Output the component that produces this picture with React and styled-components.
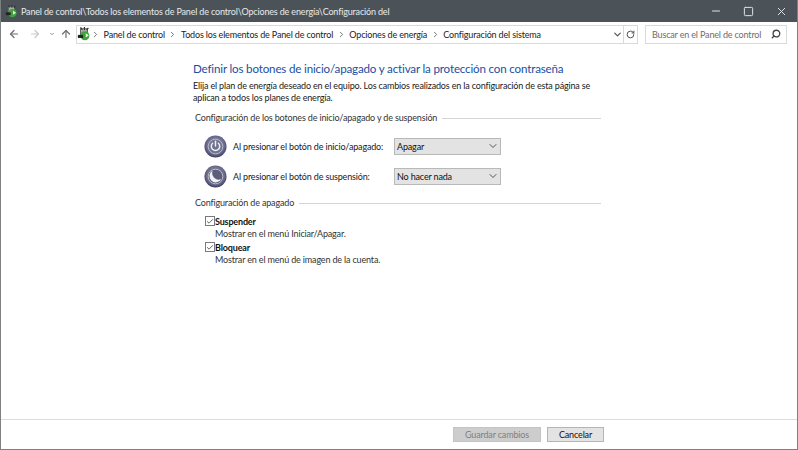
import React from 'react'
import styled, { createGlobalStyle } from 'styled-components'
import { ArrowLeft, ArrowRight, ArrowUp, ChevronDown, ChevronRight, RotateCw, Search, Minus, Square, X, Check } from 'lucide-react'

const Global = createGlobalStyle`
  html, body { margin: 0; padding: 0; height: 100%; background: #fff; }
  body { font-family: "Lato", "Open Sans", sans-serif; font-size: 9px; letter-spacing: -0.16px; color: #1a1a1a; }
  #root { height: 100%; }
`

const Win = styled.div`
  width: 798px;
  height: 450px;
  box-sizing: border-box;
  border: 1px solid #7d8184;
  border-top: none;
  display: flex;
  flex-direction: column;
  overflow: hidden;
`
const TitleBar = styled.div`
  height: 22px;
  margin: 0 -1px;
  flex: none;
  background: #4b5359;
  color: #e8eaeb;
  display: flex;
  align-items: center;
  padding-left: 5px;
`
const TitleText = styled.span`
  margin-left: 3px;
  flex: 1;
  white-space: nowrap;
`
const WinBtn = styled.div`
  width: 33px;
  display: flex;
  justify-content: center;
  color: #dfe2e4;
`
const NavBar = styled.div`
  height: 24px;
  flex: none;
  display: flex;
  align-items: center;
  padding: 0 10px 0 6px;
`
const NavBtn = styled.div`
  width: ${p => p.$w}px;
  flex: none;
  display: flex;
  justify-content: center;
  color: ${p => p.$color || '#6d6d6d'};
`
const Address = styled.div`
  width: 562px;
  height: 19px;
  flex: none;
  box-sizing: border-box;
  border: 1px solid #d9d9d9;
  display: flex;
  align-items: center;
  color: #222;
`
const Crumb = styled.span`
  margin: 0 3.6px;
  white-space: nowrap;
`
const Sep = styled.span`
  display: flex;
  color: #777;
  flex: none;
`
const AddressEnd = styled.div`
  margin-left: auto;
  display: flex;
  align-items: center;
  height: 100%;
  color: #555;
`
const RefreshBox = styled.div`
  width: 14px;
  height: 100%;
  border-left: 1px solid #d9d9d9;
  box-sizing: border-box;
  display: flex;
  align-items: center;
  justify-content: center;
`
const SearchBox = styled.div`
  width: 142px;
  height: 19px;
  margin-left: auto;
  box-sizing: border-box;
  border: 1px solid #d9d9d9;
  display: flex;
  align-items: center;
  justify-content: space-between;
  padding: 0 5px 0 6px;
  color: #6d6d6d;
  white-space: nowrap;
`
const Body = styled.main`
  flex: 1;
  padding: 15px 0 0 192px;
  width: 408px;
`
const Heading = styled.h1`
  margin: 0;
  font-size: 11.6px;
  line-height: 15px;
  font-weight: 400;
  letter-spacing: -0.17px;
  color: #1b4fa0;
  white-space: nowrap;
`
const Intro = styled.p`
  margin: 4px 0 0;
  line-height: 12px;
  white-space: nowrap;
`
const Group = styled.div`
  display: flex;
  align-items: center;
  margin: ${p => p.$mt}px 0 0 2px;
  color: #333;
  line-height: 12px;
  white-space: nowrap;
  &::after {
    content: '';
    flex: 1;
    height: 1px;
    margin-left: 5px;
    background: #d4d4d4;
  }
`
const ActionRow = styled.div`
  display: flex;
  align-items: center;
  height: 30px;
  padding-left: 11px;
  margin-top: ${p => p.$mt}px;
`
const ActionLabel = styled.span`
  width: 161px;
  margin-left: 6px;
  white-space: nowrap;
`
const Select = styled.div`
  width: 107px;
  height: 17px;
  box-sizing: border-box;
  border: 1px solid #b9b9b9;
  background: #e3e3e3;
  color: #111;
  display: flex;
  align-items: center;
  justify-content: space-between;
  padding: 0 1px 0 2px;
`
const CheckRow = styled.div`
  display: flex;
  margin: ${p => p.$mt}px 0 0 12px;
`
const Box = styled.div`
  width: 10px;
  height: 10px;
  flex: none;
  margin-top: 2px;
  box-sizing: border-box;
  border: 1px solid #7a7a7a;
  display: flex;
  align-items: center;
  justify-content: center;
  color: #555;
`
const CheckText = styled.div`
  line-height: 12px;
  white-space: nowrap;
  padding-top: 2px;
`
const CheckTitle = styled.div`
  font-weight: 700;
  color: #111;
`
const CheckHint = styled.div`
  color: #333;
`
const Footer = styled.footer`
  height: 30px;
  flex: none;
  border-top: 1px solid #dcdcdc;
  display: flex;
  justify-content: flex-end;
  align-items: center;
  gap: 6px;
  padding-right: 193px;
  box-sizing: border-box;
`
const Btn = styled.div`
  width: ${p => p.$w}px;
  height: 15px;
  box-sizing: border-box;
  border: 1px solid ${p => p.$off ? '#c4c4c4' : '#b5b5b5'};
  background: ${p => p.$off ? '#cdcdcd' : '#e3e3e3'};
  color: ${p => p.$off ? '#7f7f7f' : '#111'};
  display: flex;
  align-items: center;
  justify-content: center;
`

const CpIcon = ({ size }) => (
  <svg width={size} height={size} viewBox="0 0 16 16" style={{ flex: 'none' }}>
    <rect x="4" y="2" width="8" height="9" fill="#9fb0a0" stroke="#555" />
    <circle cx="9" cy="10" r="5.2" fill="#3fa53a" />
    <path d="M1 9h6v3.5H1z" fill="#222" />
    <path d="M4 0.5l2 2.5 M8.5 0v3.5 M13 1l-2 2.5" stroke="#333" strokeWidth="1.3" />
    <path d="M10 7l3.5 2.5-3.5 2.5z" fill="#e9f5e5" />
  </svg>
)

const OrbIcon = ({ moon }) => (
  <svg width="23" height="23" viewBox="0 0 24 24" style={{ flex: 'none' }}>
    <defs>
      <radialGradient id={moon ? 'orbM' : 'orbP'} cx="50%" cy="45%" r="55%">
        <stop offset="0%" stopColor="#a5a5c0" />
        <stop offset="75%" stopColor="#6a6a8c" />
        <stop offset="100%" stopColor="#3c3c58" />
      </radialGradient>
    </defs>
    <circle cx="12" cy="12" r="11.5" fill={`url(#${moon ? 'orbM' : 'orbP'})`} />
    <circle cx="12" cy="12" r="7.6" fill={moon ? '#5d5f78' : '#70738e'} stroke="#c2c2d4" strokeWidth=".9" />
    {moon ? (
      <path d="M9 5.8a6.6 6.6 0 1 0 9 9 7 7 0 0 1-9-9z" fill="#f1f1f6" />
    ) : (
      <g fill="none" stroke="#f0f0f6" strokeWidth="1.5" strokeLinecap="round">
        <path d="M9 8.6a4.4 4.4 0 1 0 6 0" />
        <path d="M12 6.5v5" />
      </g>
    )}
  </svg>
)

const Arrow = () => <ChevronDown size={12} strokeWidth={1} absoluteStrokeWidth color="#555" />
const Bread = () => <Sep><ChevronRight size={9} strokeWidth={1} absoluteStrokeWidth /></Sep>

export default function App() {
  return (
    <>
      <Global />
      <Win>
        <TitleBar>
          <CpIcon size={13} />
          <TitleText>Panel de control\Todos los elementos de Panel de control\Opciones de energía\Configuración del</TitleText>
          <WinBtn><Minus size={12} strokeWidth={1} absoluteStrokeWidth /></WinBtn>
          <WinBtn><Square size={11} strokeWidth={1} absoluteStrokeWidth /></WinBtn>
          <WinBtn><X size={13} strokeWidth={1} absoluteStrokeWidth /></WinBtn>
        </TitleBar>
        <NavBar>
          <NavBtn $w={14}><ArrowLeft size={12} strokeWidth={1.2} absoluteStrokeWidth /></NavBtn>
          <NavBtn $w={28} $color="#c8c8c8"><ArrowRight size={12} strokeWidth={1.2} absoluteStrokeWidth /></NavBtn>
          <NavBtn $w={6}><ChevronDown size={8} strokeWidth={1} absoluteStrokeWidth /></NavBtn>
          <NavBtn $w={21}><ArrowUp size={12} strokeWidth={1.2} absoluteStrokeWidth /></NavBtn>
          <Address>
            <CpIcon size={14} />
            <Bread />
            <Crumb>Panel de control</Crumb>
            <Bread />
            <Crumb>Todos los elementos de Panel de control</Crumb>
            <Bread />
            <Crumb>Opciones de energía</Crumb>
            <Bread />
            <Crumb>Configuración del sistema</Crumb>
            <AddressEnd>
              <ChevronDown size={11} strokeWidth={1.2} absoluteStrokeWidth />
              <RefreshBox><RotateCw size={9} strokeWidth={1} absoluteStrokeWidth /></RefreshBox>
            </AddressEnd>
          </Address>
          <SearchBox>
            <span>Buscar en el Panel de control</span>
            <Search size={10} strokeWidth={1.3} absoluteStrokeWidth color="#444" style={{ transform: 'scaleX(-1)' }} />
          </SearchBox>
        </NavBar>
        <Body>
          <Heading>Definir los botones de inicio/apagado y activar la protección con contraseña</Heading>
          <Intro>
            Elija el plan de energía deseado en el equipo. Los cambios realizados en la configuración de esta página se<br />
            aplican a todos los planes de energía.
          </Intro>
          <Group $mt={8}>Configuración de los botones de inicio/apagado y de suspensión</Group>
          <ActionRow $mt={7}>
            <OrbIcon />
            <ActionLabel>Al presionar el botón de inicio/apagado:</ActionLabel>
            <Select>Apagar<Arrow /></Select>
          </ActionRow>
          <ActionRow $mt={0}>
            <OrbIcon moon />
            <ActionLabel>Al presionar el botón de suspensión:</ActionLabel>
            <Select>No hacer nada<Arrow /></Select>
          </ActionRow>
          <Group $mt={6}>Configuración de apagado</Group>
          <CheckRow $mt={5}>
            <Box><Check size={9} strokeWidth={1} absoluteStrokeWidth /></Box>
            <CheckText>
              <CheckTitle>Suspender</CheckTitle>
              <CheckHint>Mostrar en el menú Iniciar/Apagar.</CheckHint>
            </CheckText>
          </CheckRow>
          <CheckRow $mt={0}>
            <Box><Check size={9} strokeWidth={1} absoluteStrokeWidth /></Box>
            <CheckText>
              <CheckTitle>Bloquear</CheckTitle>
              <CheckHint>Mostrar en el menú de imagen de la cuenta.</CheckHint>
            </CheckText>
          </CheckRow>
        </Body>
        <Footer>
          <Btn $w={88} $off>Guardar cambios</Btn>
          <Btn $w={57}>Cancelar</Btn>
        </Footer>
      </Win>
    </>
  )
}
